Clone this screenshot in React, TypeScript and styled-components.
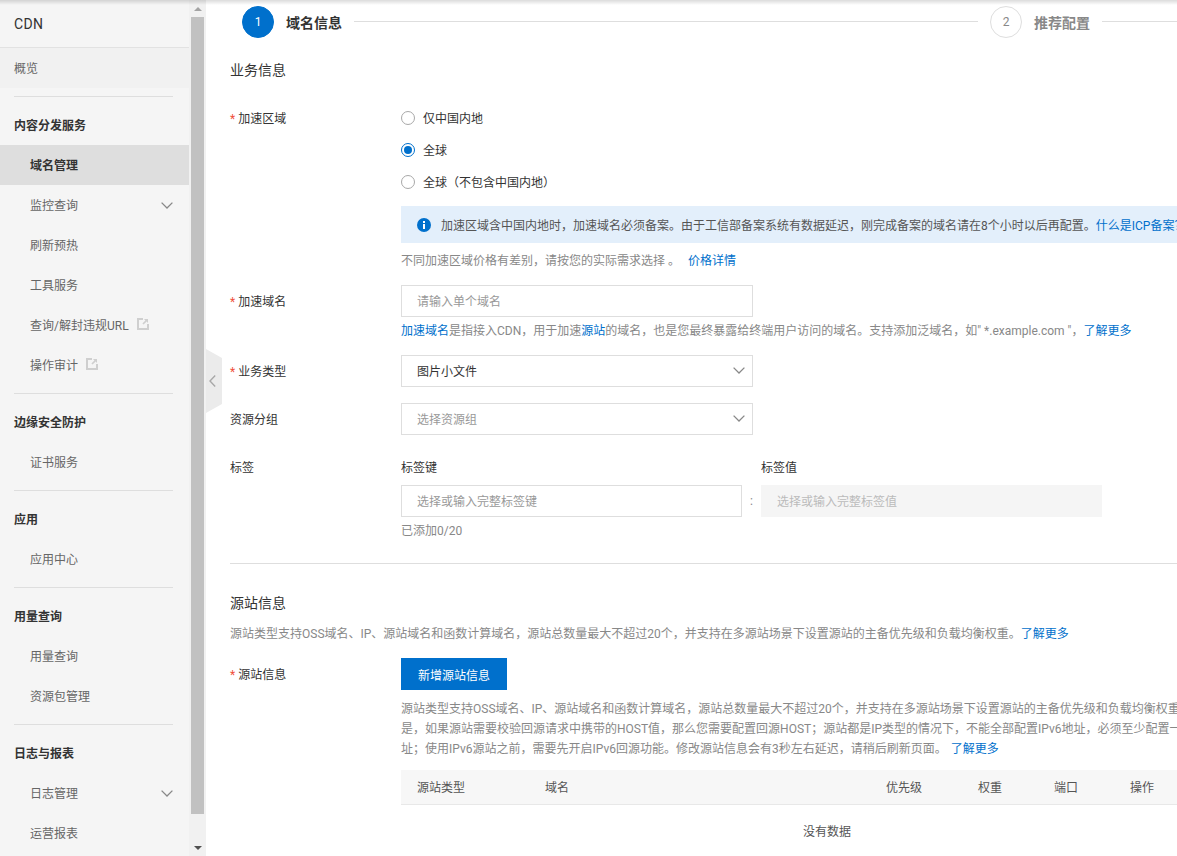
import styled, { createGlobalStyle } from 'styled-components';

const BLUE = '#0070cc';

const GlobalStyle = createGlobalStyle`
  html, body {
    margin: 0;
    height: 100%;
    overflow: hidden;
    background: #fff;
  }
  body {
    font-family: Roboto, "Noto Sans CJK SC", sans-serif;
    font-size: 12px;
    color: #333;
  }
  * { box-sizing: border-box; }
`;

const Page = styled.div`
  position: relative;
  display: flex;
  width: 100vw;
  height: 100vh;
  overflow: hidden;
`;

const TopShadow = styled.div`
  position: absolute;
  top: 0;
  left: 0;
  right: 0;
  height: 5px;
  background: linear-gradient(rgba(0, 0, 0, 0.14), rgba(0, 0, 0, 0));
  pointer-events: none;
`;

/* side menu */
const Sidebar = styled.nav`
  flex: 0 0 189px;
  height: 100%;
  background: #f5f5f5;
  overflow: hidden;
`;

const SideHeader = styled.div`
  height: 48px;
  padding-left: 14px;
  line-height: 49px;
  font-size: 14px;
  letter-spacing: 0.3px;
  color: #333;
  border-bottom: 1px solid #e2e2e2;
`;

const Overview = styled.div`
  height: 40px;
  padding-left: 14px;
  line-height: 42px;
  color: #666;
  background: #f1f1f1;
`;

const Divider = styled.div`
  height: 1px;
  margin: 8px 16px 8px 14px;
  background: #dedede;
`;

const SectionTitle = styled.div`
  height: 40px;
  padding-left: 14px;
  line-height: 42px;
  font-weight: 700;
  color: #333;
`;

const MenuItem = styled.div<{ $active?: boolean }>`
  display: flex;
  align-items: center;
  height: 40px;
  padding: 0 16px 0 30px;
  color: ${(p) => (p.$active ? '#333' : '#666')};
  font-weight: ${(p) => (p.$active ? 700 : 400)};
  background: ${(p) => (p.$active ? '#dedede' : 'transparent')};
`;

const MenuText = styled.span`
  flex: 1;
  display: flex;
  align-items: center;
  padding-bottom: 2px;
`;

const ExternalMark = styled.svg`
  flex: none;
  width: 12px;
  height: 12px;
  margin-left: 8px;
`;

/* the browser's own scrollbar as it stands in the picture */
const ScrollTrack = styled.div`
  flex: 0 0 17px;
  display: flex;
  flex-direction: column;
  align-items: center;
  height: 100%;
  background: #f1f1f1;
`;

const ScrollArrow = styled.div<{ $down?: boolean }>`
  flex: none;
  width: 17px;
  height: 17px;
  display: flex;
  align-items: center;
  justify-content: center;
  &::before {
    content: '';
    border-left: 4px solid transparent;
    border-right: 4px solid transparent;
    ${(p) =>
      p.$down ? 'border-top: 4px solid #505050;' : 'border-bottom: 4px solid #a3a3a3;'}
  }
`;

const ScrollThumb = styled.div`
  flex: 0 0 797px;
  width: 13px;
  background: #c1c1c1;
`;

const ScrollRest = styled.div`
  flex: 1;
`;

const CollapseHandle = styled.div`
  position: absolute;
  left: 206px;
  top: 349px;
  width: 16px;
  height: 64px;
  padding-right: 3px;
  display: flex;
  align-items: center;
  justify-content: center;
  background: #ebebeb;
  clip-path: polygon(0 0, 100% 14%, 100% 86%, 0 100%);
`;

/* main column */
const Main = styled.main`
  flex: 1;
  min-width: 0;
  height: 100%;
  padding-left: 24px;
  overflow: hidden;
`;

const Stepper = styled.div`
  display: flex;
  width: 1500px;
  padding: 6px 0 0 12px;
`;

const Step = styled.div`
  flex: 0 0 748px;
  display: flex;
  align-items: center;
`;

const StepCircle = styled.div<{ $on?: boolean }>`
  flex: none;
  width: 32px;
  height: 32px;
  border-radius: 50%;
  line-height: 31px;
  text-align: center;
  font-size: 12px;
  color: ${(p) => (p.$on ? '#fff' : '#888')};
  background: ${(p) => (p.$on ? BLUE : '#fff')};
  border: 1px solid ${(p) => (p.$on ? BLUE : '#dedede')};
`;

const StepTitle = styled.div<{ $on?: boolean }>`
  flex: none;
  margin: 2px 0 0 12px;
  font-size: 14px;
  font-weight: 700;
  line-height: 20px;
  color: ${(p) => (p.$on ? '#333' : '#888')};
`;

const StepLine = styled.div`
  flex: 1;
  height: 1px;
  margin: -1px 12px 0;
  background: #dedede;
`;

const Form = styled.div`
  width: 1023px;
`;

const GroupTitle = styled.div<{ $top: number }>`
  margin-top: ${(p) => p.$top}px;
  font-size: 14px;
  line-height: 20px;
  color: #333;
`;

const Field = styled.div<{ $top: number }>`
  display: grid;
  grid-template-columns: 171px 852px;
  margin-top: ${(p) => p.$top}px;
`;

const Label = styled.div<{ $short?: boolean }>`
  height: ${(p) => (p.$short ? 20 : 32)}px;
  line-height: ${(p) => (p.$short ? 20 : 34)}px;
  color: #333;
`;

const Star = styled.span`
  margin-right: 3px;
  color: #f0503c;
`;

const RadioRow = styled.label`
  display: flex;
  align-items: center;
  height: 32px;
  color: #333;
`;

const RadioText = styled.span`
  padding-bottom: 2px;
`;

const RadioMark = styled.span<{ $on?: boolean }>`
  flex: none;
  display: flex;
  align-items: center;
  justify-content: center;
  width: 14px;
  height: 14px;
  margin-right: 8px;
  border-radius: 50%;
  background: #fff;
  border: 1px solid ${(p) => (p.$on ? BLUE : '#a8a8a8')};
  &::after {
    content: '';
    display: ${(p) => (p.$on ? 'block' : 'none')};
    width: 8px;
    height: 8px;
    border-radius: 50%;
    background: ${BLUE};
  }
`;

const InfoBox = styled.div`
  display: flex;
  align-items: center;
  height: 37px;
  margin-top: 8px;
  padding-left: 16px;
  white-space: nowrap;
  color: #555;
  background: #e3effb;
`;

const InfoIcon = styled.svg`
  flex: none;
  width: 14px;
  height: 14px;
  margin-right: 10px;
`;

const Hint = styled.div<{ $top?: number }>`
  margin-top: ${(p) => p.$top ?? 0}px;
  line-height: 20px;
  white-space: nowrap;
  color: #888;
`;

const Link = styled.a<{ $left?: number }>`
  margin-left: ${(p) => p.$left ?? 0}px;
  color: ${BLUE};
  text-decoration: none;
`;

const TextInput = styled.input<{ $w: number }>`
  display: block;
  width: ${(p) => p.$w}px;
  height: 32px;
  padding: 2px 15px 0;
  font: inherit;
  color: #333;
  outline: none;
  background: #fff;
  border: 1px solid #dedede;
  border-radius: 0;
  &::placeholder {
    color: #999;
    opacity: 1;
  }
  &:disabled {
    background: #f5f5f5;
    border-color: #f5f5f5;
  }
  &:disabled::placeholder {
    color: #bbb;
  }
`;

const Select = styled.div<{ $empty?: boolean }>`
  display: flex;
  align-items: center;
  justify-content: space-between;
  width: 352px;
  height: 32px;
  padding: 0 7px 2px 15px;
  color: ${(p) => (p.$empty ? '#999' : '#333')};
  background: #fff;
  border: 1px solid #dedede;
`;

const TagHeads = styled.div`
  display: grid;
  grid-template-columns: 360px 341px;
  line-height: 20px;
  color: #333;
`;

const TagInputs = styled.div`
  display: flex;
  align-items: center;
  margin-top: 7px;
`;

const Colon = styled.span`
  flex: 0 0 19px;
  text-align: center;
  color: #888;
`;

const Rule = styled.div`
  height: 1px;
  margin-top: 22px;
  background: #dedede;
`;

const PrimaryButton = styled.button`
  display: block;
  width: 106px;
  height: 32px;
  padding: 0;
  font: inherit;
  color: #fff;
  background: ${BLUE};
  border: 0;
`;

const HelpBlock = styled.div`
  margin-top: 9px;
  line-height: 20px;
  white-space: nowrap;
  color: #888;
`;

const TableHead = styled.div`
  display: grid;
  grid-template-columns: 128px 341px 92px 76px 76px 1fr;
  align-items: center;
  height: 35px;
  margin-top: 11px;
  padding: 0 0 2px 16px;
  color: #555;
  background: #f7f7f7;
  border-bottom: 1px solid #e8e8e8;
`;

const EmptyRow = styled.div`
  margin-top: 17px;
  line-height: 20px;
  text-align: center;
  color: #555;
`;

const Chevron = ({ w = 12 }: { w?: number }) => (
  <svg width={w} height={7} viewBox="0 0 12 7" fill="none" preserveAspectRatio="none">
    <path d="M0.6 0.6 6 6 11.4 0.6" stroke="#888" strokeWidth="1.3" />
  </svg>
);

const External = () => (
  <ExternalMark viewBox="0 0 12 12" fill="none">
    <path d="M6 1H1v10h10V6" stroke="#cfcfcf" strokeWidth="2" />
    <path d="M7 1h4v4L9.6 3.6 6.6 6.6 5.4 5.4l3-3z" fill="#cfcfcf" />
  </ExternalMark>
);

const Asterisk = () => <Star>*</Star>;

const App = () => {
  return (
    <Page>
      <GlobalStyle />
      <Sidebar>
        <SideHeader>CDN</SideHeader>
        <Overview>概览</Overview>
        <Divider />
        <SectionTitle>内容分发服务</SectionTitle>
        <MenuItem $active>
          <MenuText>域名管理</MenuText>
        </MenuItem>
        <MenuItem>
          <MenuText>监控查询</MenuText>
          <Chevron />
        </MenuItem>
        <MenuItem>
          <MenuText>刷新预热</MenuText>
        </MenuItem>
        <MenuItem>
          <MenuText>工具服务</MenuText>
        </MenuItem>
        <MenuItem>
          <MenuText>
            查询/解封违规URL
            <External />
          </MenuText>
        </MenuItem>
        <MenuItem>
          <MenuText>
            操作审计
            <External />
          </MenuText>
        </MenuItem>
        <Divider />
        <SectionTitle>边缘安全防护</SectionTitle>
        <MenuItem>
          <MenuText>证书服务</MenuText>
        </MenuItem>
        <Divider />
        <SectionTitle>应用</SectionTitle>
        <MenuItem>
          <MenuText>应用中心</MenuText>
        </MenuItem>
        <Divider />
        <SectionTitle>用量查询</SectionTitle>
        <MenuItem>
          <MenuText>用量查询</MenuText>
        </MenuItem>
        <MenuItem>
          <MenuText>资源包管理</MenuText>
        </MenuItem>
        <Divider />
        <SectionTitle>日志与报表</SectionTitle>
        <MenuItem>
          <MenuText>日志管理</MenuText>
          <Chevron />
        </MenuItem>
        <MenuItem>
          <MenuText>运营报表</MenuText>
        </MenuItem>
      </Sidebar>

      <ScrollTrack>
        <ScrollArrow />
        <ScrollThumb />
        <ScrollRest />
        <ScrollArrow $down />
      </ScrollTrack>

      <Main>
        <Stepper>
          <Step>
            <StepCircle $on>1</StepCircle>
            <StepTitle $on>域名信息</StepTitle>
            <StepLine />
          </Step>
          <Step>
            <StepCircle>2</StepCircle>
            <StepTitle>推荐配置</StepTitle>
            <StepLine />
          </Step>
        </Stepper>

        <Form>
          <GroupTitle $top={22}>业务信息</GroupTitle>

          <Field $top={22}>
            <Label>
              <Asterisk />
              加速区域
            </Label>
            <div>
              <RadioRow>
                <RadioMark />
                <RadioText>仅中国内地</RadioText>
              </RadioRow>
              <RadioRow>
                <RadioMark $on />
                <RadioText>全球</RadioText>
              </RadioRow>
              <RadioRow>
                <RadioMark />
                <RadioText>全球（不包含中国内地）</RadioText>
              </RadioRow>
              <InfoBox>
                <InfoIcon viewBox="0 0 14 14">
                  <circle cx="7" cy="7" r="7" fill={BLUE} />
                  <rect x="6" y="6" width="2" height="5" fill="#fff" />
                  <rect x="6" y="3" width="2" height="2" fill="#fff" />
                </InfoIcon>
                加速区域含中国内地时，加速域名必须备案。由于工信部备案系统有数据延迟，刚完成备案的域名请在8个小时以后再配置。
                <Link>什么是ICP备案？</Link>
              </InfoBox>
              <Hint $top={8}>
                不同加速区域价格有差别，请按您的实际需求选择 。
                <Link $left={8}>价格详情</Link>
              </Hint>
            </div>
          </Field>

          <Field $top={14}>
            <Label>
              <Asterisk />
              加速域名
            </Label>
            <div>
              <TextInput $w={352} placeholder="请输入单个域名" />
              <Hint $top={4}>
                <Link>加速域名</Link>是指接入CDN，用于加速<Link>源站</Link>
                的域名，也是您最终暴露给终端用户访问的域名。支持添加泛域名，如" *.example.com "，
                <Link>了解更多</Link>
              </Hint>
            </div>
          </Field>

          <Field $top={14}>
            <Label>
              <Asterisk />
              业务类型
            </Label>
            <Select>
              图片小文件
              <Chevron />
            </Select>
          </Field>

          <Field $top={16}>
            <Label>资源分组</Label>
            <Select $empty>
              选择资源组
              <Chevron />
            </Select>
          </Field>

          <Field $top={23}>
            <Label $short>标签</Label>
            <div>
              <TagHeads>
                <span>标签键</span>
                <span>标签值</span>
              </TagHeads>
              <TagInputs>
                <TextInput $w={341} placeholder="选择或输入完整标签键" />
                <Colon>:</Colon>
                <TextInput $w={341} placeholder="选择或输入完整标签值" disabled />
              </TagInputs>
              <Hint $top={4}>已添加0/20</Hint>
            </div>
          </Field>

          <Rule />

          <GroupTitle $top={29}>源站信息</GroupTitle>
          <Hint $top={11}>
            源站类型支持OSS域名、IP、源站域名和函数计算域名，源站总数量最大不超过20个，并支持在多源站场景下设置源站的主备优先级和负载均衡权重。
            <Link>了解更多</Link>
          </Hint>

          <Field $top={14}>
            <Label>
              <Asterisk />
              源站信息
            </Label>
            <div>
              <PrimaryButton>新增源站信息</PrimaryButton>
              <HelpBlock>
                <div>
                  源站类型支持OSS域名、IP、源站域名和函数计算域名，源站总数量最大不超过20个，并支持在多源站场景下设置源站的主备优先级和负载均衡权重
                </div>
                <div>
                  是，如果源站需要校验回源请求中携带的HOST值，那么您需要配置回源HOST；源站都是IP类型的情况下，不能全部配置IPv6地址，必须至少配置一
                </div>
                <div>
                  址；使用IPv6源站之前，需要先开启IPv6回源功能。修改源站信息会有3秒左右延迟，请稍后刷新页面。
                  <Link $left={4}>了解更多</Link>
                </div>
              </HelpBlock>
              <TableHead>
                <span>源站类型</span>
                <span>域名</span>
                <span>优先级</span>
                <span>权重</span>
                <span>端口</span>
                <span>操作</span>
              </TableHead>
              <EmptyRow>没有数据</EmptyRow>
            </div>
          </Field>
        </Form>
      </Main>

      <CollapseHandle>
        <svg width="7" height="12" viewBox="0 0 7 12" fill="none">
          <path d="M6.2 0.6 1 6l5.2 5.4" stroke="#a8a8a8" strokeWidth="1.4" />
        </svg>
      </CollapseHandle>
      <TopShadow />
    </Page>
  );
};

export default App;
